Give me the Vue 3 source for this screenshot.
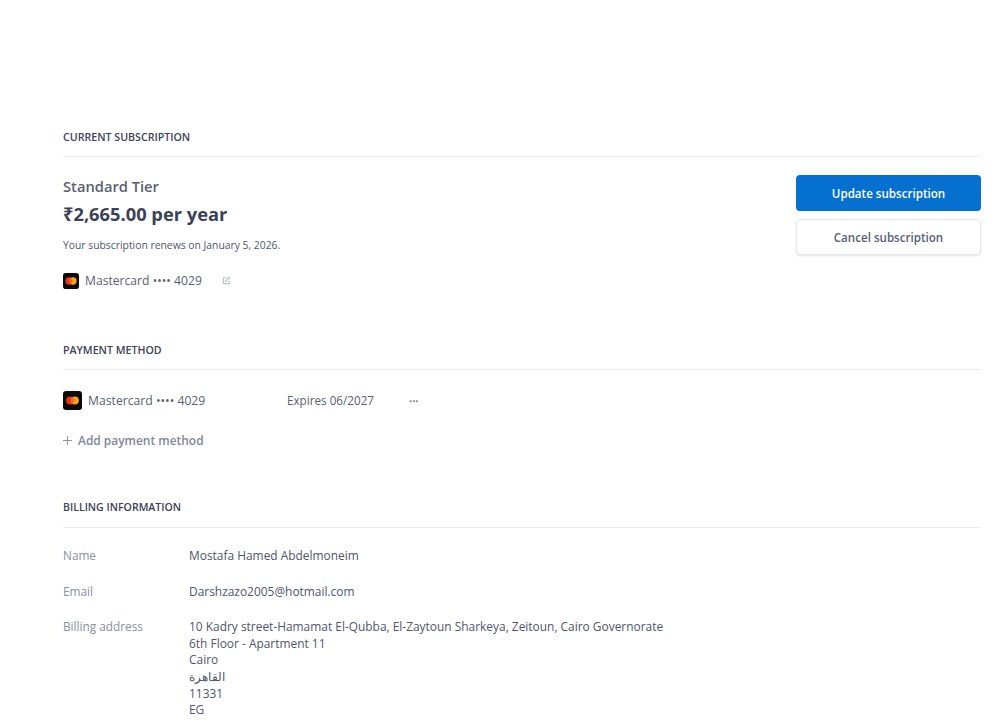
<script setup>
const billing = [
  { label: 'Name', lines: ['Mostafa Hamed Abdelmoneim'] },
  { label: 'Email', lines: ['Darshzazo2005@hotmail.com'] },
  {
    label: 'Billing address',
    lines: [
      '10 Kadry street-Hamamat El-Qubba, El-Zaytoun Sharkeya, Zeitoun, Cairo Governorate',
      '6th Floor - Apartment 11',
      'Cairo',
      'القاهرة',
      '11331',
      'EG',
    ],
  },
]
</script>

<template>
  <main class="page">
    <section class="section first">
      <h2 class="heading">CURRENT SUBSCRIPTION</h2>
      <div class="sub-body">
        <div class="sub-info">
          <div class="tier">Standard Tier</div>
          <div class="price">₹2,665.00 per year</div>
          <div class="renew">Your subscription renews on January 5, 2026.</div>
          <div class="card-line">
            <svg class="mc small" viewBox="0 0 17 17" aria-hidden="true">
              <rect width="17" height="17" rx="3" fill="#0d0a0b" />
              <circle cx="6.4" cy="8.5" r="3.9" fill="#e5331d" />
              <circle cx="10.6" cy="8.5" r="3.9" fill="#f7a11f" />
              <path d="M8.5 5.3a3.9 3.9 0 0 1 0 6.4a3.9 3.9 0 0 1 0-6.4z" fill="#f4691c" />
            </svg>
            <span class="card-text">Mastercard •••• 4029</span>
            <svg class="edit" viewBox="0 0 10 10" aria-hidden="true">
              <path d="M8 5.8V8.6H1.4V2H4.2" fill="none" stroke="#a6adb8" stroke-width="1" />
              <path d="M3.8 6.2L4.1 4.6L7.8 1L9 2.2L5.4 5.9z" fill="none" stroke="#a6adb8" stroke-width="0.9" />
            </svg>
          </div>
        </div>
        <div class="actions">
          <button class="btn primary">Update subscription</button>
          <button class="btn secondary">Cancel subscription</button>
        </div>
      </div>
    </section>

    <section class="section second">
      <h2 class="heading">PAYMENT METHOD</h2>
      <div class="pm-row">
        <svg class="mc large" viewBox="0 0 19 19" aria-hidden="true">
          <rect width="19" height="19" rx="3" fill="#0d0a0b" />
          <circle cx="7.2" cy="9.5" r="4.1" fill="#e5331d" />
          <circle cx="11.8" cy="9.5" r="4.1" fill="#f7a11f" />
          <path d="M9.5 6.1a4.1 4.1 0 0 1 0 6.8a4.1 4.1 0 0 1 0-6.8z" fill="#f4691c" />
        </svg>
        <span class="pm-name">Mastercard •••• 4029</span>
        <span class="pm-exp">Expires 06/2027</span>
        <span class="pm-more">···</span>
      </div>
      <div class="add">
        <svg class="plus" viewBox="0 0 9 9" aria-hidden="true">
          <path d="M4.5 0V9M0 4.5H9" stroke="#8f97a5" stroke-width="1" fill="none" />
        </svg>
        <span>Add payment method</span>
      </div>
    </section>

    <section class="section third">
      <h2 class="heading tall">BILLING INFORMATION</h2>
      <dl class="info">
        <div v-for="row in billing" :key="row.label" class="info-row">
          <dt class="info-label">{{ row.label }}</dt>
          <dd class="info-value">
            <div v-for="line in row.lines" :key="line">{{ line }}</div>
          </dd>
        </div>
      </dl>
    </section>
  </main>
</template>

<style>
html, body { margin: 0; background: #fff; overflow: hidden; }
</style>

<style scoped>
.page {
  box-sizing: border-box;
  height: 721px;
  overflow: hidden;
  padding: 129px 19px 0 63px;
  font-family: "Open Sans", "Noto Sans", sans-serif;
  color: #3c4257;
  font-size: 12px;
}
.section { display: block; }
.second { margin-top: 53px; }
.third { margin-top: 50px; }
.heading {
  margin: 0;
  height: 27px;
  line-height: 16px;
  font-size: 10.65px;
  font-weight: 600;
  color: #3c4257;
  border-bottom: 1px solid #ebeef1;
}
.heading.tall { height: 28px; font-size: 10.55px; }
.sub-body {
  display: flex;
  justify-content: space-between;
  padding-top: 18px;
}
.tier { font-size: 14.7px; line-height: 22px; font-weight: 600; color: #5a6072; }
.price { margin-top: 5px; font-size: 18.3px; line-height: 24px; font-weight: 700; color: #3c4257; }
.renew { margin-top: 12px; font-size: 10.35px; line-height: 14px; color: #4f566b; }
.card-line { display: flex; align-items: center; margin-top: 20px; height: 17px; }
.mc { display: block; flex: none; }
.mc.small { width: 16px; height: 16px; }
.mc.large { width: 19px; height: 19px; }
.card-text { margin-left: 6px; font-size: 12.15px; color: #5a6072; }
.edit { width: 9px; height: 9px; margin-left: 20px; }
.actions { display: flex; flex-direction: column; gap: 8px; width: 185px; }
.btn {
  display: block;
  box-sizing: border-box;
  width: 185px;
  height: 36px;
  border-radius: 4px;
  font-family: inherit;
  font-size: 11.6px;
  font-weight: 600;
  cursor: pointer;
}
.primary { background: #0570cf; color: #fff; border: 0; }
.secondary {
  background: #fff;
  color: #5a6072;
  border: 1px solid #e6e8ec;
  box-shadow: 0 1px 2px rgba(60, 66, 87, 0.14);
}
.pm-row { display: flex; align-items: center; margin-top: 21px; height: 19px; font-size: 12.2px; color: #5a6072; }
.pm-name { margin-left: 6px; width: 199px; }
.pm-exp { width: 122px; font-size: 11.7px; line-height: 17px; padding-bottom: 1px; }
.pm-more { font-size: 11px; font-weight: 700; color: #697386; line-height: 12px; }
.add {
  display: flex;
  align-items: center;
  gap: 6px;
  margin-top: 21px;
  height: 18px;
  font-size: 11.95px;
  font-weight: 600;
  color: #808899;
}
.plus { width: 9px; height: 9px; }
.info { margin: 19px 0 0; }
.info-row { display: flex; margin-bottom: 19px; font-size: 11.8px; line-height: 16.6px; }
.info-label { width: 126px; color: #8a909c; }
.info-value { margin: 0; color: #4f566b; font-size: 11.93px; }
</style>
